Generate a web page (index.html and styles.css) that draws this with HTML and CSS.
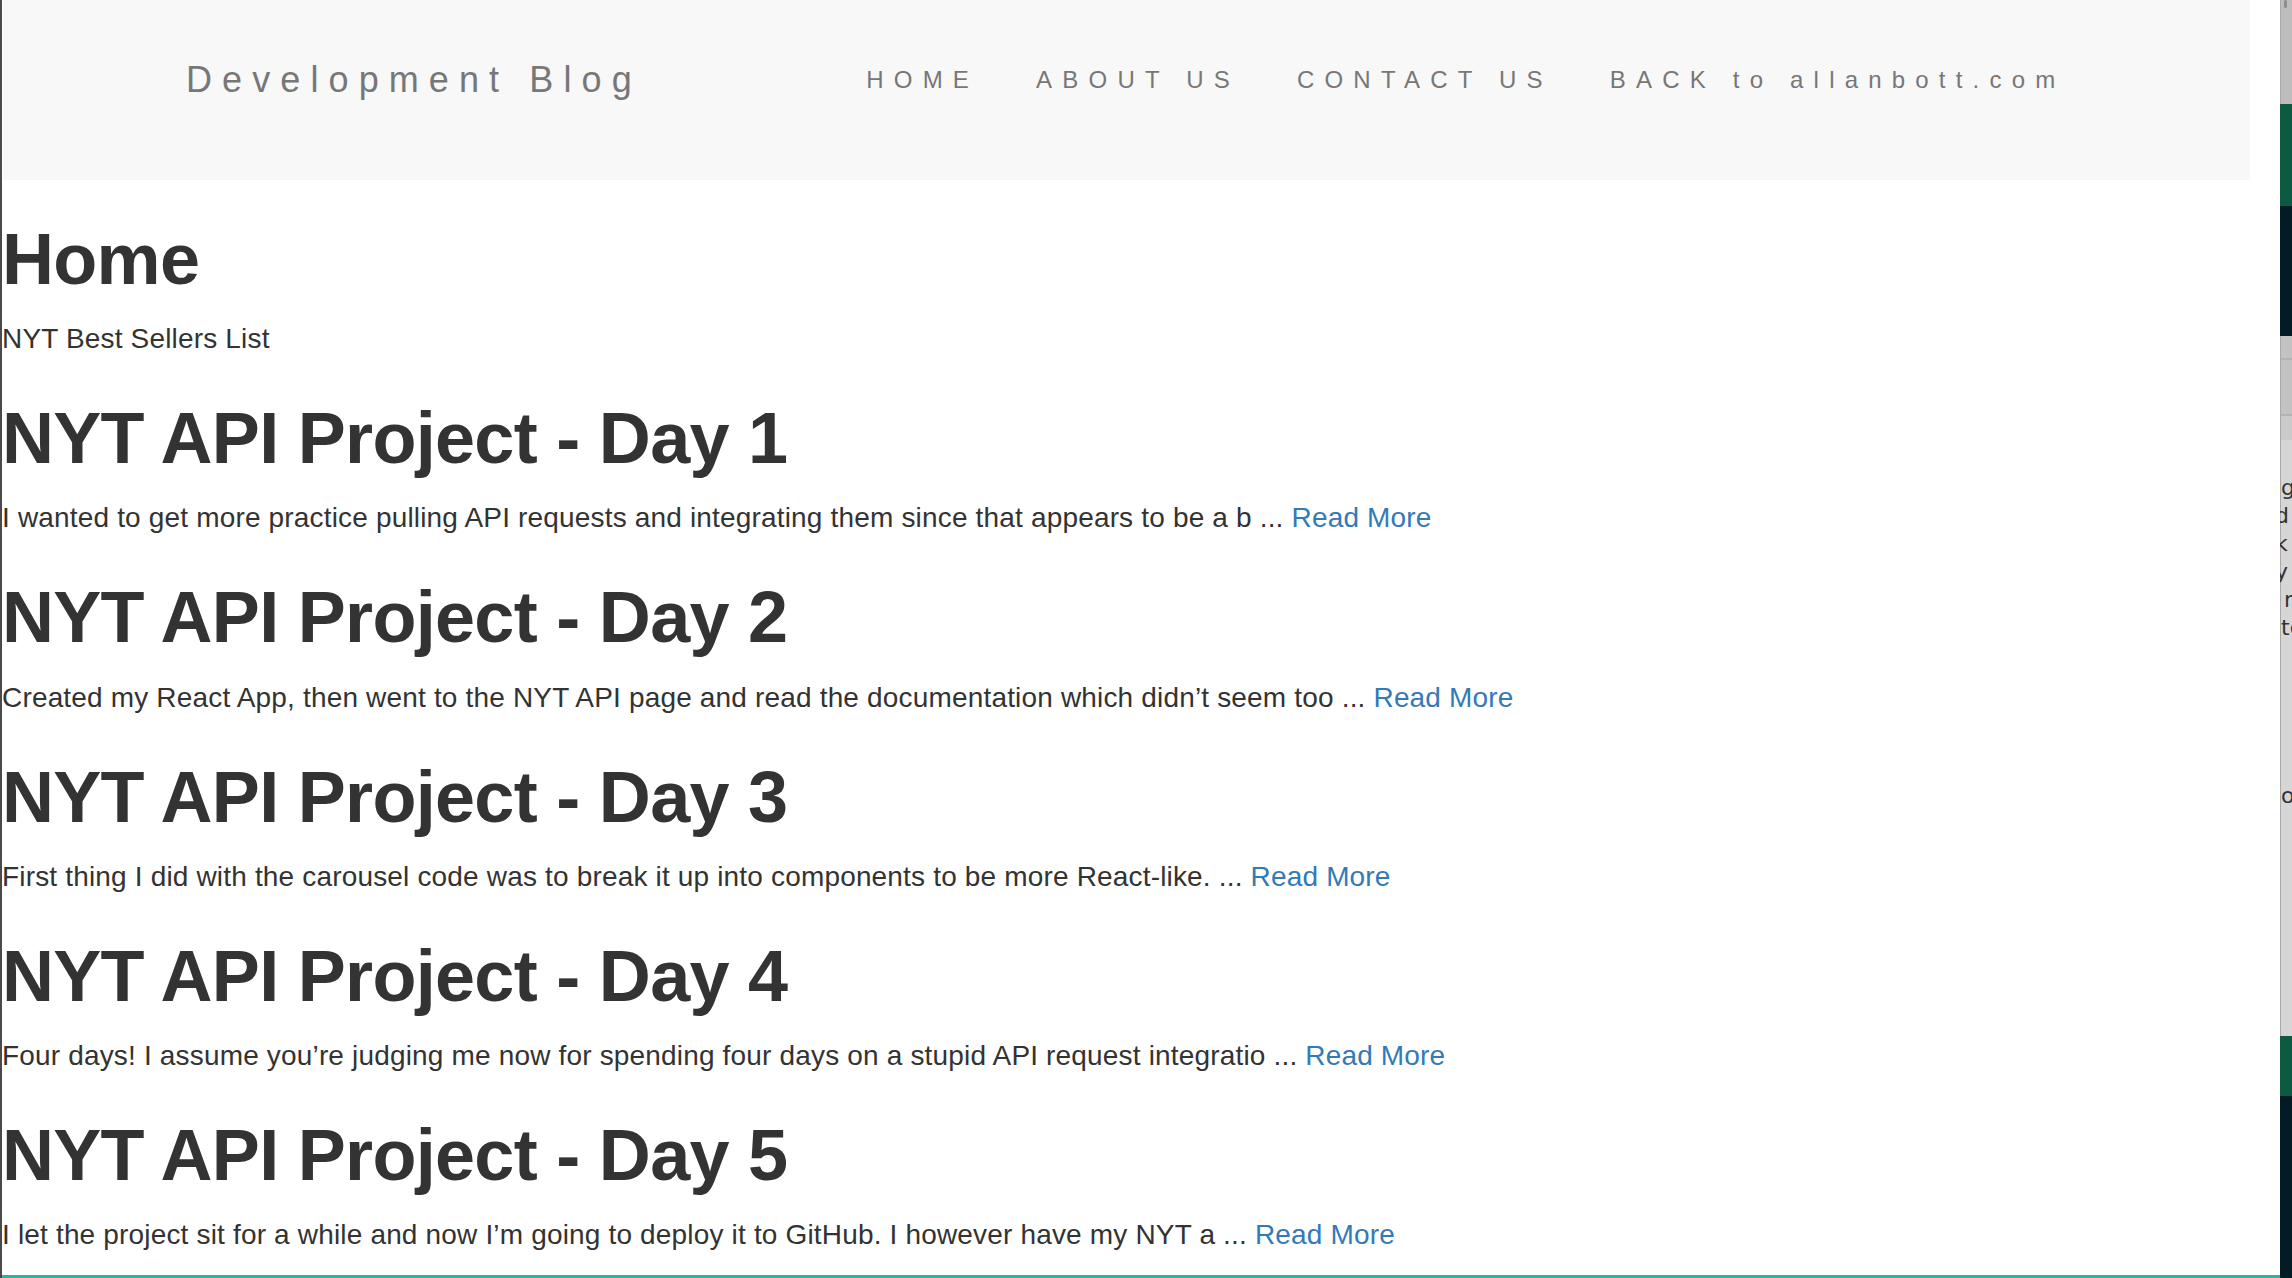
FILE: index.html
```html
<!DOCTYPE html>
<html lang="en">
<head>
<meta charset="utf-8">
<title>Development Blog</title>
<link rel="stylesheet" href="styles.css">
</head>
<body>
<div class="screen">
  <div class="edge"></div>
  <div class="page">
    <header class="navbar">
      <a class="brand" href="#">Development Blog</a>
      <nav class="nav">
        <a href="#">HOME</a>
        <a href="#">ABOUT US</a>
        <a href="#">CONTACT US</a>
        <a href="#">BACK to allanbott.com</a>
      </nav>
    </header>
    <main class="content">
      <h1>Home</h1>
      <p class="sub">NYT Best Sellers List</p>
      <article class="post">
        <h1>NYT API Project - Day 1</h1>
        <div class="excerpt">I wanted to get more practice pulling API requests and integrating them since that appears to be a b ... <a href="#">Read More</a></div>
      </article>
      <article class="post">
        <h1>NYT API Project - Day 2</h1>
        <div class="excerpt">Created my React App, then went to the NYT API page and read the documentation which didn’t seem too ... <a href="#">Read More</a></div>
      </article>
      <article class="post">
        <h1>NYT API Project - Day 3</h1>
        <div class="excerpt">First thing I did with the carousel code was to break it up into components to be more React-like. ... <a href="#">Read More</a></div>
      </article>
      <article class="post">
        <h1>NYT API Project - Day 4</h1>
        <div class="excerpt">Four days! I assume you’re judging me now for spending four days on a stupid API request integratio ... <a href="#">Read More</a></div>
      </article>
      <article class="post">
        <h1>NYT API Project - Day 5</h1>
        <div class="excerpt">I let the project sit for a while and now I’m going to deploy it to GitHub. I however have my NYT a ... <a href="#">Read More</a></div>
      </article>
    </main>
  </div>
  <aside class="desk">
    <div class="d-scroll"><span class="thumb"></span></div>
    <div class="d-green"></div>
    <div class="d-navy"></div>
    <div class="d-bar"></div>
    <div class="d-doc">
      <span>go</span>
      <span class="cut">d</span>
      <span class="cut">k</span>
      <span class="cut">y</span>
      <span class="in">r</span>
      <span>to</span>
      <span class="gap"></span>
      <span>o</span>
    </div>
    <div class="d-green2"></div>
    <div class="d-navy2"></div>
  </aside>
</div>
</body>
</html>
```
FILE: styles.css
```css
html, body {
  margin: 0;
  padding: 0;
  background: #ffffff;
}

body {
  font-family: "Liberation Sans", Arial, Helvetica, sans-serif;
  color: #333333;
  font-size: 28px;
  line-height: 40px;
}

.screen {
  display: flex;
  width: 2292px;
  height: 1278px;
  overflow: hidden;
}

.edge {
  width: 2px;
  flex: none;
  background: #4a4a4a;
}

.page {
  flex: 1;
  min-width: 0;
  display: flex;
  flex-direction: column;
  border-bottom: 3px solid #2bb59c;
  overflow: hidden;
}

.navbar {
  flex: none;
  height: 180px;
  margin-left: 1px;
  margin-right: 30px;
  background: #f8f8f8;
  display: flex;
  align-items: center;
  padding: 0 0 20px 183px;
  box-sizing: border-box;
}

.brand {
  font-size: 36px;
  line-height: 40px;
  letter-spacing: 10.1px;
  color: #777777;
  text-decoration: none;
  white-space: nowrap;
}

.nav {
  display: flex;
  margin-left: 196px;
}

.nav a {
  font-size: 24px;
  line-height: 40px;
  letter-spacing: 10.2px;
  color: #777777;
  text-decoration: none;
  padding: 0 28.5px;
  white-space: nowrap;
}

.content {
  padding: 0;
}

.content h1 {
  font-size: 72px;
  line-height: 79.2px;
  font-weight: 700;
  letter-spacing: -0.7px;
  margin: 40px 0 20px;
  color: #333333;
}

.sub {
  margin: 0 0 20px;
  letter-spacing: 0.17px;
}

.excerpt {
  white-space: nowrap;
  letter-spacing: 0.17px;
}

.excerpt a {
  color: #337ab7;
  text-decoration: none;
}

/* sliver of the window behind */
.desk {
  width: 12px;
  flex: none;
  display: flex;
  flex-direction: column;
  overflow: hidden;
}

.d-scroll {
  height: 104px;
  background: #bdbdbd;
  border-left: 1px solid #a9a9a9;
  position: relative;
}

.thumb {
  position: absolute;
  left: 3px;
  top: 0;
  width: 3px;
  height: 8px;
  border-radius: 2px;
  background: #8c8c8c;
}

.d-green {
  height: 102px;
  background: #0c5a41;
}

.d-navy {
  height: 130px;
  background: #031b25;
}

.d-bar {
  height: 104px;
  background: linear-gradient(#c2c2c2 0 22px, #b3b3b3 22px 24px, #c2c2c2 24px 78px, #b3b3b3 78px 80px, #cacaca 80px);
  border-left: 1px solid #a9a9a9;
}

.d-doc {
  height: 596px;
  background: #d6d6d6;
  border-left: 1px solid #a9a9a9;
  box-sizing: border-box;
  padding-top: 34px;
  display: flex;
  flex-direction: column;
  font-family: "DejaVu Sans", sans-serif;
  font-size: 22px;
  line-height: 28px;
  color: #333333;
  white-space: nowrap;
}

.d-doc .cut {
  margin-left: -6px;
}

.d-doc .in {
  margin-left: 3px;
}

.d-doc .gap {
  height: 140px;
}

.d-green2 {
  height: 60px;
  background: #0c5a41;
}

.d-navy2 {
  flex: 1;
  background: #031b25;
}
```
